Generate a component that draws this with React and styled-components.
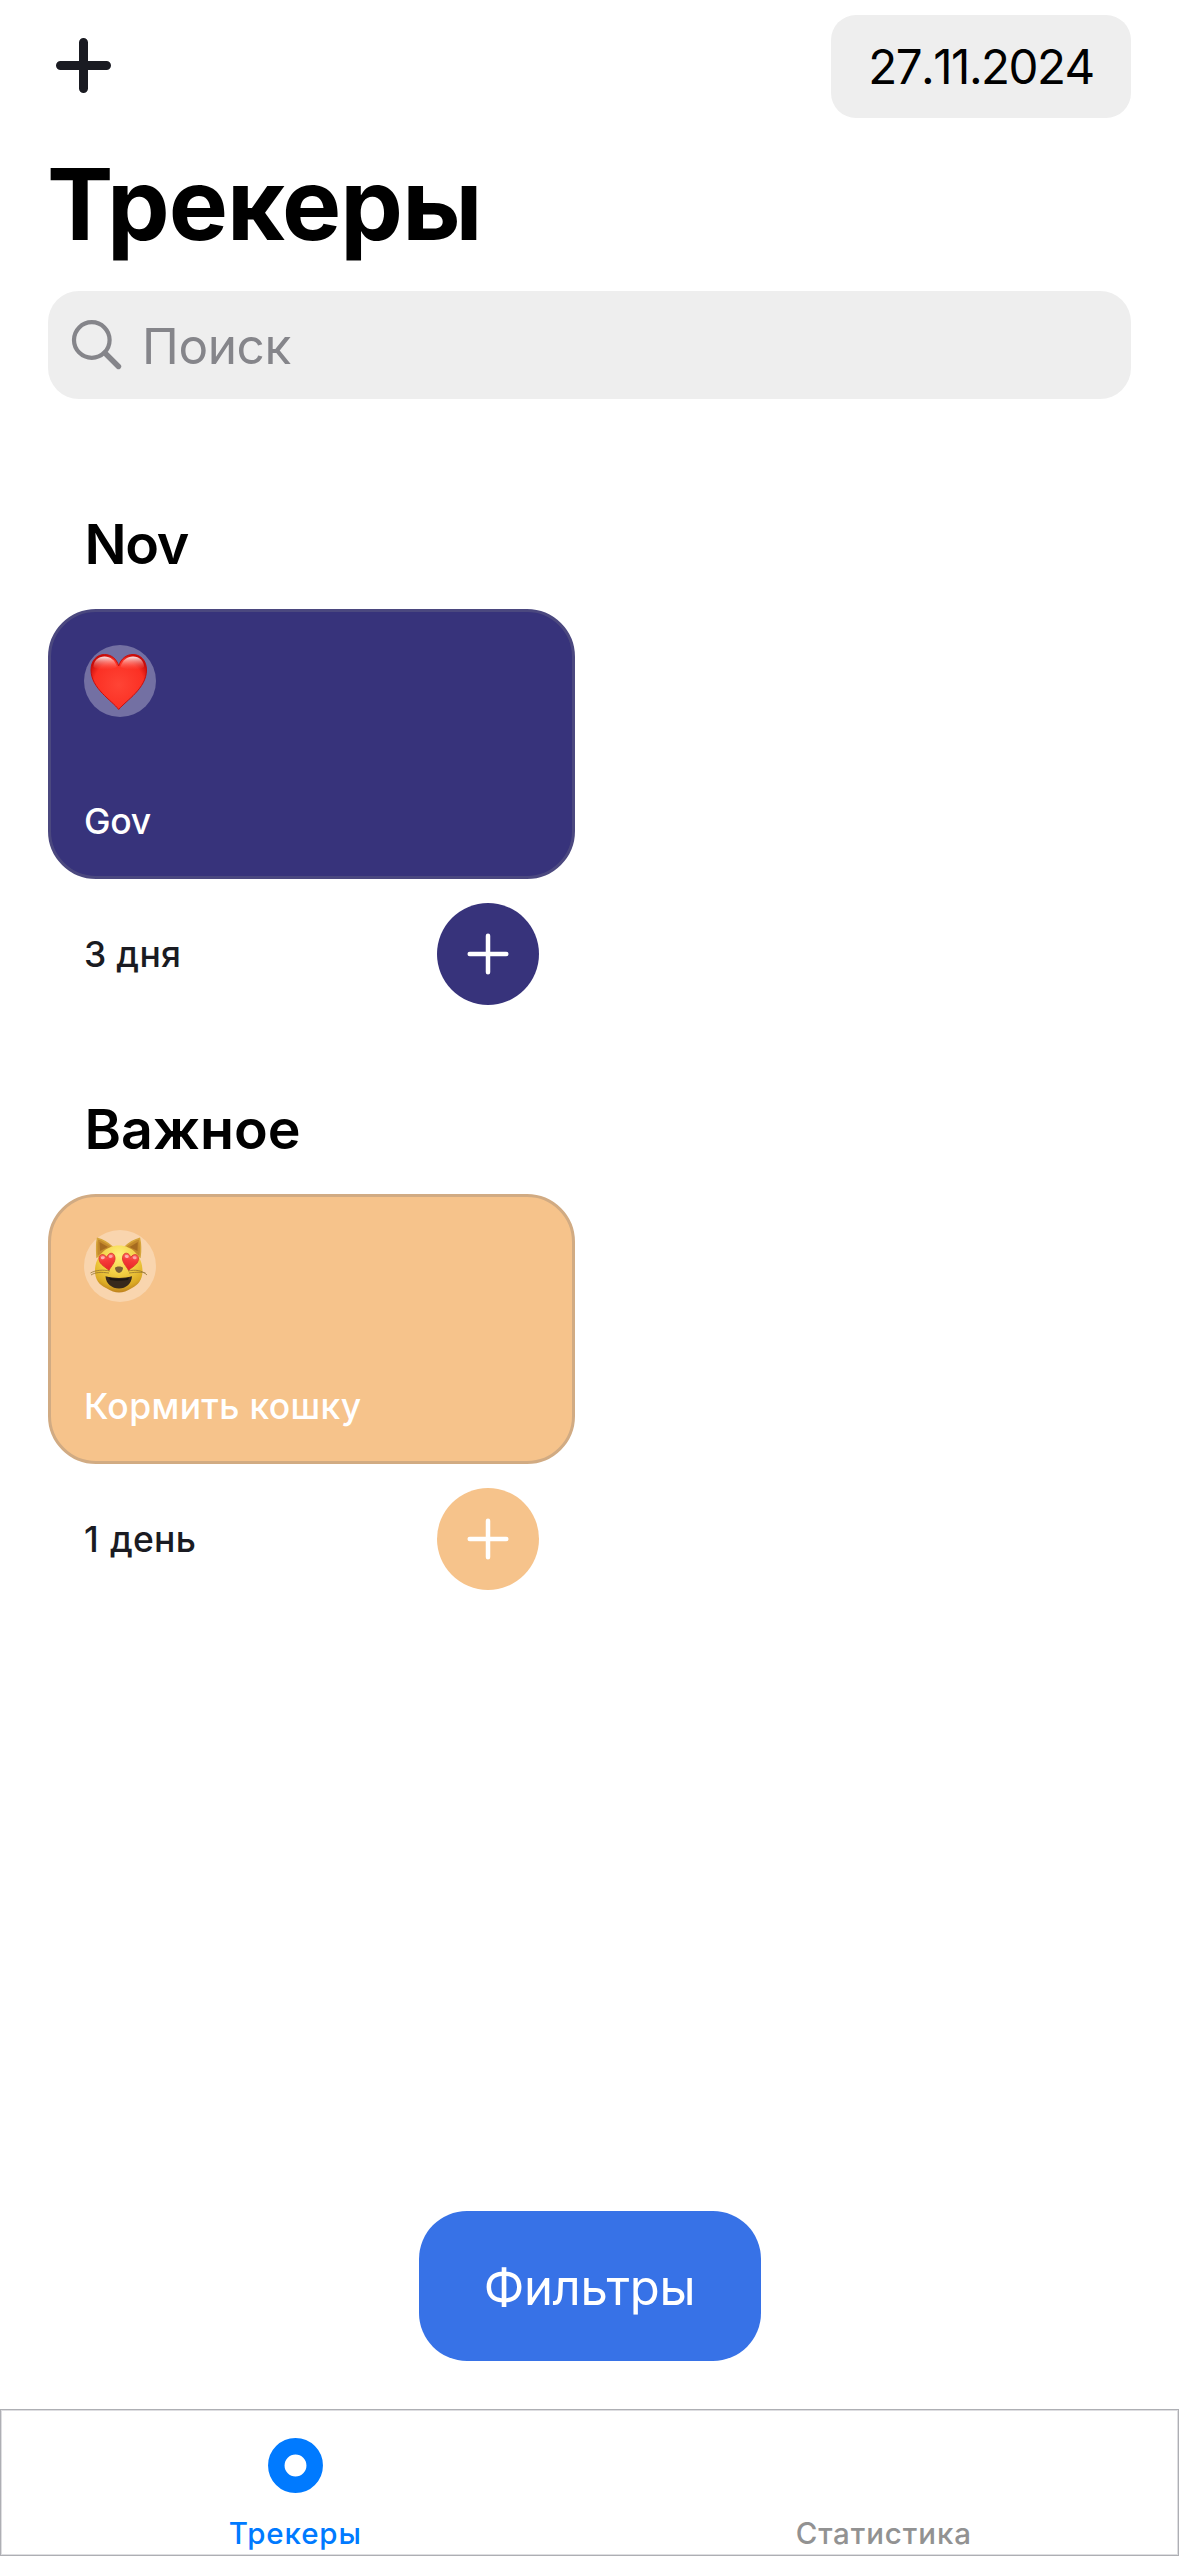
import React from "react";
import styled, { createGlobalStyle } from "styled-components";

const GlobalStyle = createGlobalStyle`
  *, *::before, *::after { box-sizing: border-box; }
  body { margin: 0; background: #fff; }
  button { border: 0; padding: 0; margin: 0; background: none; font: inherit; cursor: pointer; }
  h1, h2, p { margin: 0; }
  svg { display: block; }
`;

const Page = styled.div`
  width: 1179px;
  height: 2556px;
  display: flex;
  flex-direction: column;
  background: #fff;
  color: #000;
  font-family: Inter, "Liberation Sans", sans-serif;
  overflow: hidden;
`;

const Header = styled.header`
  display: flex;
  justify-content: space-between;
  align-items: center;
  height: 103px;
  margin: 15px 48px 0;
`;

const AddButton = styled.button`
  width: 71px;
  height: 71px;
  margin-bottom: 2px;
`;

const DateButton = styled.button`
  width: 300px;
  height: 103px;
  border-radius: 25px;
  background: #eeeeee;
  font-size: 47.5px;
  font-kerning: none;
  line-height: 103px;
  letter-spacing: -1.5px;
  white-space: nowrap;
`;

const Title = styled.h1`
  margin: 36px 47px 0;
  height: 100px;
  font-size: 99.5px;
  font-weight: 700;
  line-height: 100px;
  letter-spacing: -0.9px;
  white-space: nowrap;
`;

const SearchBar = styled.div`
  display: flex;
  align-items: center;
  gap: 18px;
  height: 108px;
  margin: 37px 48px 0;
  padding-left: 22px;
  border-radius: 31px;
  background: #eeeeee;
`;

const SearchHint = styled.span`
  padding-top: 2px;
  color: #85858a;
  font-size: 49.5px;
  line-height: 60px;
  letter-spacing: -0.4px;
`;

const TrackerList = styled.main`
  flex: 1;
  display: flex;
  flex-direction: column;
  gap: 94px;
  padding: 115px 48px 0;
`;

const Section = styled.section`
  display: flex;
  flex-direction: column;
  gap: 35px;
`;

const SectionTitle = styled.h2`
  padding-left: 36.5px;
  height: 60px;
  font-size: 55.5px;
  font-weight: 600;
  line-height: 60px;
  letter-spacing: ${(p) => p.$spacing}px;
`;

const Tracker = styled.article`
  width: 527px;
`;

const Card = styled.div`
  display: flex;
  flex-direction: column;
  justify-content: space-between;
  height: 270px;
  padding: 33px 33px 31px;
  border: 3px solid ${(p) => p.$border};
  border-radius: 48px;
  background: ${(p) => p.$color};
`;

const EmojiBadge = styled.div`
  display: grid;
  place-items: center;
  width: 72px;
  height: 72px;
  border-radius: 50%;
  background: rgba(255, 255, 255, 0.3);
`;

const CardName = styled.p`
  color: #fff;
  font-size: 35.5px;
  font-weight: 500;
  line-height: 46px;
  letter-spacing: ${(p) => p.$spacing}px;
  white-space: nowrap;
`;

const CardFooter = styled.div`
  display: flex;
  justify-content: space-between;
  align-items: center;
  height: 102px;
  margin-top: 24px;
  padding: 0 36px;
`;

const DayCount = styled.span`
  color: #1a1b22;
  font-size: 35.5px;
  font-weight: 500;
  line-height: 54px;
  letter-spacing: ${(p) => p.$spacing}px;
  word-spacing: ${(p) => p.$gap}px;
  padding-top: 2px;
`;

const DoneButton = styled.button`
  display: grid;
  place-items: center;
  width: 102px;
  height: 102px;
  border-radius: 50%;
  background: ${(p) => p.$color};
`;

const FilterButton = styled.button`
  align-self: center;
  flex: none;
  width: 342px;
  height: 150px;
  margin-bottom: 48px;
  border-radius: 48px;
  background: #3772e7;
  color: #fff;
  font-size: 49px;
  line-height: 153px;
  letter-spacing: -0.3px;
`;

const TabBar = styled.nav`
  flex: none;
  display: grid;
  grid-template-columns: 1fr 1fr;
  height: 147px;
  border: 1.5px solid #aeafb4;
  box-shadow: inset 0 0 0 1px #dedee1;
`;

const Tab = styled.button`
  display: flex;
  flex-direction: column;
  align-items: center;
  justify-content: flex-end;
  gap: 22px;
  padding-bottom: 4px;
  color: ${(p) => p.$color};
  font-size: 29.5px;
  font-weight: 500;
  line-height: 36px;
  letter-spacing: 0.9px;
`;

const Heart = () => (
  <svg width="72" height="72" viewBox="0 0 72 72" role="img" aria-label="❤️">
    <defs>
      <radialGradient id="heartFill" cx="0.5" cy="0.55" r="0.6">
        <stop offset="0" stopColor="#ff4435" />
        <stop offset="0.75" stopColor="#fb3024" />
        <stop offset="1" stopColor="#c80a08" />
      </radialGradient>
      <linearGradient id="heartShine" x1="0" y1="0" x2="0" y2="1">
        <stop offset="0" stopColor="#fff" stopOpacity="0.9" />
        <stop offset="1" stopColor="#ff6a5c" stopOpacity="0" />
      </linearGradient>
    </defs>
    <path
      d="M34.7 64.5C28 55.500 7 43.500 7 25C7 15.500 13 9.500 20.500 9.500C27 9.500 32.500 13.500 34.700 21C37 13.500 42.500 9.500 49 9.500C56.500 9.500 62.500 15.500 62.500 25C62.500 43.500 42 55.500 34.700 64.500Z"
      fill="url(#heartFill)"
      stroke="#c90d0a"
      strokeWidth="1"
    />
    <path d="M9.500 22C9.500 16 14 11.500 20.500 11.500C26.500 11.500 31 15 33 22C28 25 14 26 9.500 22Z" fill="url(#heartShine)" />
    <path d="M60 22C60 16 55.500 11.500 49 11.500C43 11.500 38.500 15 36.500 22C41.500 25 55.500 26 60 22Z" fill="url(#heartShine)" />
  </svg>
);

const eye = "M0 9C-3 5-8 2-8-3C-8-9-2-9 0-4C2-9 8-9 8-3C8 2 3 5 0 9Z";

const HeartCat = () => (
  <svg width="72" height="72" viewBox="0 0 72 72" role="img" aria-label="😻">
    <defs>
      <radialGradient id="catFace" cx="0.5" cy="0.2" r="0.82">
        <stop offset="0" stopColor="#fff07c" />
        <stop offset="0.5" stopColor="#f2ce42" />
        <stop offset="0.82" stopColor="#dbaa24" />
        <stop offset="1" stopColor="#b97a1d" />
      </radialGradient>
      <linearGradient id="catEye" x1="0" y1="0" x2="0" y2="1">
        <stop offset="0" stopColor="#ff6b63" />
        <stop offset="0.4" stopColor="#f63a38" />
        <stop offset="1" stopColor="#e52327" />
      </linearGradient>
    </defs>
    <path d="M13 27C12.500 20 12.500 13 13.500 8.500C19 10 24 13 28.500 17Z" fill="#c48a2c" stroke="#d6a53a" strokeWidth="1.500" />
    <path d="M56 27C57 20 56.500 13 55.500 8.500C50 10 45 13 41 17Z" fill="#c48a2c" stroke="#d6a53a" strokeWidth="1.500" />
    <path d="M16 21L15.500 12L24 17Z" fill="#a66b20" />
    <path d="M53.500 21L53.800 12L45.500 17Z" fill="#a66b20" />
    <path d="M35 15.500C48 15.500 58.500 26 58.500 41C58.500 50 54 55 48 58C43 61 39 62.500 35 62.500C31 62.500 27 61 22 58C15.500 55 11 50 11 41C11 26 22 15.500 35 15.500Z" fill="url(#catFace)" />
    <g transform="translate(23.500 31.500) rotate(-9)">
      <path d={eye} fill="url(#catEye)" stroke="#d8332c" strokeWidth="0.800" />
      <ellipse cx="-4" cy="-4.500" rx="2" ry="1.500" fill="#ffc9c4" opacity="0.800" />
      <ellipse cx="4" cy="-4.500" rx="2" ry="1.500" fill="#ffc9c4" opacity="0.700" />
    </g>
    <g transform="translate(46 31.500) rotate(9)">
      <path d={eye} fill="url(#catEye)" stroke="#d8332c" strokeWidth="0.800" />
      <ellipse cx="-4" cy="-4.500" rx="2" ry="1.500" fill="#ffc9c4" opacity="0.800" />
      <ellipse cx="4" cy="-4.500" rx="2" ry="1.500" fill="#ffc9c4" opacity="0.700" />
    </g>
    <path d="M35 43C32.500 42.500 31 40 31 38C31.500 36 38.500 36 39 38C39 40 37.500 42.500 35 43Z" fill="#7b6035" />
    <path d="M21.500 46.300C30 48.500 40 48.500 48 46.300C47.500 54 42 58.500 35 58.500C28 58.500 22 54 21.500 46.300Z" fill="#38291c" />
    <path d="M25 47.500C32 49.300 39 49.300 45 47.500L44 50C38 51 31 51 26 50Z" fill="#1d1711" />
    <g fill="none" stroke="#91722e" strokeWidth="0.900" opacity="0.850">
      <path d="M26 41C19 39.500 12 40 6.500 43" />
      <path d="M25 43C17 42 12 42 7 45" />
      <path d="M44 41C51 39.500 58 40 63 45" />
      <path d="M45 43C53 42 58 42 61.500 43" />
    </g>
  </svg>
);

const Plus = ({ size, arm, width, color }) => (
  <svg width={size} height={size} viewBox={`${-size / 2} ${-size / 2} ${size} ${size}`}>
    <path d={`M${-arm} 0H${arm}M0 ${-arm}V${arm}`} stroke={color} strokeWidth={width} strokeLinecap="round" />
  </svg>
);

const Magnifier = () => (
  <svg width="54" height="54" viewBox="0 0 54 54" fill="none" stroke="#85858a">
    <circle cx="21.800" cy="22" r="17.800" strokeWidth="4.200" />
    <path d="M35 35L48.500 48.500" strokeWidth="5.400" strokeLinecap="round" />
  </svg>
);

const sections = [
  {
    title: "Nov", titleSpacing: -1.3, color: "#37337b", border: "#4b487f",
    Emoji: Heart, name: "Gov", nameSpacing: -0.3, days: "3 дня", daysSpacing: 0.3, daysGap: 0,
  },
  {
    title: "Важное", titleSpacing: 0, color: "#f6c38b", border: "#d1ab83",
    Emoji: HeartCat, name: "Кормить кошку", nameSpacing: 0.35, days: "1 день", daysSpacing: 0.2, daysGap: 1.5,
  },
];

export default function App() {
  return (
    <Page>
      <GlobalStyle />
      <Header>
        <AddButton aria-label="Добавить">
          <Plus size={71} arm={23} width={9} color="#1a1b22" />
        </AddButton>
        <DateButton>27.11.2024</DateButton>
      </Header>
      <Title>Трекеры</Title>
      <SearchBar>
        <Magnifier />
        <SearchHint>Поиск</SearchHint>
      </SearchBar>
      <TrackerList>
        {sections.map(({ Emoji, ...s }) => (
          <Section key={s.title}>
            <SectionTitle $spacing={s.titleSpacing}>{s.title}</SectionTitle>
            <Tracker>
              <Card $color={s.color} $border={s.border}>
                <EmojiBadge><Emoji /></EmojiBadge>
                <CardName $spacing={s.nameSpacing}>{s.name}</CardName>
              </Card>
              <CardFooter>
                <DayCount $spacing={s.daysSpacing} $gap={s.daysGap}>{s.days}</DayCount>
                <DoneButton $color={s.color} aria-label="Отметить">
                  <Plus size={42} arm={18.3} width={4.5} color="#fff" />
                </DoneButton>
              </CardFooter>
            </Tracker>
          </Section>
        ))}
      </TrackerList>
      <FilterButton>Фильтры</FilterButton>
      <TabBar>
        <Tab $color="#007aff">
          <svg width="55" height="55" viewBox="0 0 55 55">
            <circle cx="27.500" cy="27.500" r="19.200" fill="none" stroke="#007aff" strokeWidth="16.500" />
          </svg>
          Трекеры
        </Tab>
        <Tab $color="#929292">Статистика</Tab>
      </TabBar>
    </Page>
  );
}
